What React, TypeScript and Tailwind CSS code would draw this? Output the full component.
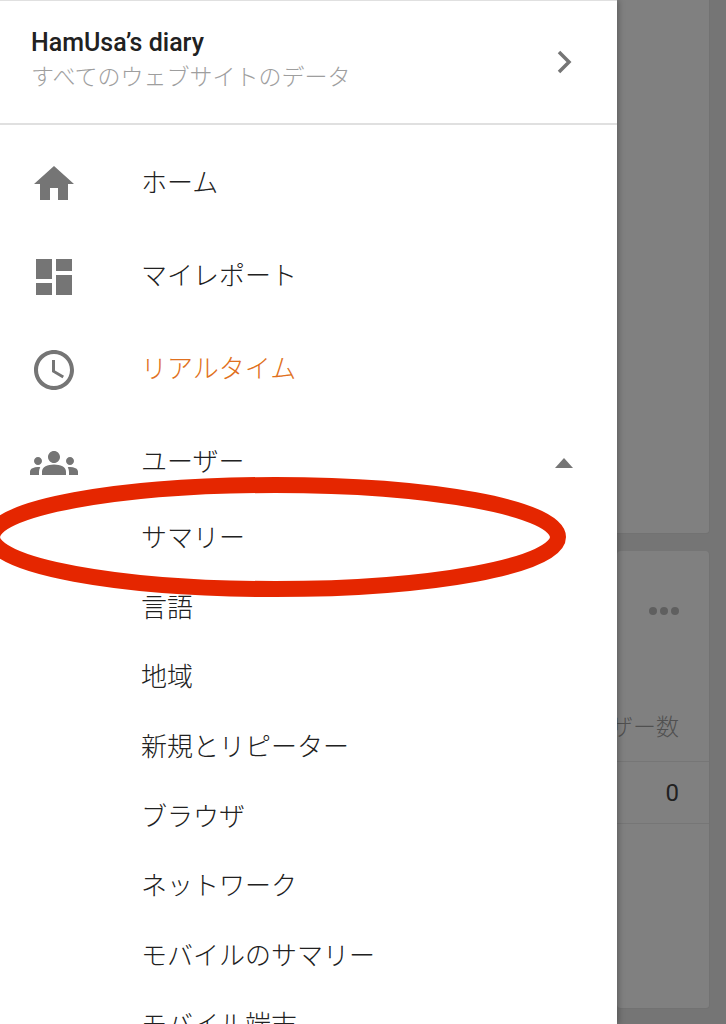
import React from 'react';

const FONT = "font-['Roboto','Noto_Sans_CJK_JP',sans-serif]";

const subItems = ['サマリー', '言語', '地域', '新規とリピーター', 'ブラウザ', 'ネットワーク', 'モバイルのサマリー', 'モバイル端末'];

const Icon: React.FC<{ d: string }> = ({ d }) => (
  <svg viewBox="0 0 24 24" className="w-12 h-12 fill-[#757575]">
    <path d={d} />
  </svg>
);

const ICONS = {
  home: 'M10 20v-6h4v6h5v-8h3L12 3 2 12h3v8z',
  dashboard: 'M3 13h8V3H3v10zm0 8h8v-6H3v6zm10 0h8V11h-8v10zm0-18v6h8V3h-8z',
  clock: 'M11.99 2C6.47 2 2 6.48 2 12s4.47 10 9.99 10C17.52 22 22 17.52 22 12S17.52 2 11.99 2zM12 20c-4.42 0-8-3.58-8-8s3.58-8 8-8 8 3.58 8 8-3.58 8-8 8zm.5-13H11v6l5.25 3.15.75-1.23-4.5-2.67z',
  groups: 'M12 12.75c1.63 0 3.07.39 4.24.9 1.08.48 1.76 1.56 1.76 2.73V18H6v-1.61c0-1.18.68-2.26 1.76-2.73 1.17-.52 2.61-.91 4.24-.91zM4 13c1.1 0 2-.9 2-2s-.9-2-2-2-2 .9-2 2 .9 2 2 2zm1.13 1.1c-.37-.06-.74-.1-1.13-.1-.99 0-1.93.21-2.78.58C.48 14.9 0 15.62 0 16.43V18h4.5v-1.61c0-.83.23-1.61.63-2.29zM20 13c1.1 0 2-.9 2-2s-.9-2-2-2-2 .9-2 2 .9 2 2 2zm4 3.43c0-.81-.48-1.53-1.22-1.85-.85-.37-1.79-.58-2.78-.58-.39 0-.76.04-1.13.1.4.68.63 1.46.63 2.29V18H24v-1.57zM12 6c1.66 0 3 1.34 3 3s-1.34 3-3 3-3-1.34-3-3 1.34-3 3-3z',
};

const NavRow: React.FC<{ icon: string; label: string; active?: boolean; children?: React.ReactNode }> = ({ icon, label, active, children }) => (
  <div className="h-[93px] flex items-center pl-[30px] pr-[44px]">
    <Icon d={icon} />
    <span className={`ml-[63px] flex-1 text-[26px] font-light ${active ? 'text-[#e07020]' : 'text-[#212121]'}`}>{label}</span>
    {children}
  </div>
);

export default function App() {
  return (
    <div className={`relative h-[1024px] w-[726px] overflow-hidden flex bg-[#757575] ${FONT}`}>
      {/* drawer */}
      <div className="relative z-10 w-[617px] h-full shrink-0 overflow-hidden bg-white shadow-[2px_0_6px_rgba(0,0,0,0.25)]">
        <div className="h-[125px] border-t border-b-2 border-[#e0e0e0] flex items-center pl-[31px] pr-[44px]">
          <div className="flex-1 -mt-[2px]">
            <div className="text-[25px] leading-[34px] font-medium text-[#212121]">HamUsa’s diary</div>
            <div className="text-[23px] leading-[36px] font-light text-[#9e9e9e]">すべてのウェブサイトのデータ</div>
          </div>
          <svg viewBox="0 0 16 24" className="w-4 h-6 fill-none stroke-[#757575] stroke-[3.5]">
            <path d="M2 2l10 10-10 10" />
          </svg>
        </div>
        <div className="pt-[12px]">
          <NavRow icon={ICONS.home} label="ホーム" />
          <NavRow icon={ICONS.dashboard} label="マイレポート" />
          <NavRow icon={ICONS.clock} label="リアルタイム" active />
          <NavRow icon={ICONS.groups} label="ユーザー">
            <div className="w-0 h-0 border-x-[9px] border-x-transparent border-b-[10px] border-b-[#757575]" />
          </NavRow>
          <div className="-mt-[5px]">
            {subItems.map((item) => (
              <div key={item} className="h-[69.6px] flex items-center pl-[141px] text-[26px] font-light text-[#212121]">
                {item}
              </div>
            ))}
          </div>
        </div>
      </div>

      {/* dimmed page behind */}
      <div className="flex-1 min-w-0 h-full pr-4 flex flex-col gap-[17px]">
        <div className="h-[534px] shrink-0 bg-[#808080] border-b border-r border-[#727272] rounded-br-sm" />
        <div className="h-[458px] shrink-0 bg-[#808080] border-b border-r border-[#727272] rounded-sm">
          <div className="h-[179px] flex flex-col items-end justify-end pr-[30px] relative">
            <div className="absolute top-[56px] right-[30px] flex gap-[3px]">
              <span className="w-2 h-2 rounded-full bg-[#5f5f5f]" />
              <span className="w-2 h-2 rounded-full bg-[#5f5f5f]" />
              <span className="w-2 h-2 rounded-full bg-[#5f5f5f]" />
            </div>
          </div>
          <div className="h-[31px] -mt-[17px] flex justify-end items-center pr-[30px] text-[23px] font-light text-[#505050] whitespace-nowrap overflow-hidden">
            ユーザー数
          </div>
          <div className="h-[62px] mt-[17px] border-t border-[#767676] flex justify-end items-center pr-[30px] text-[24px] text-[#212121]">
            0
          </div>
          <div className="border-t border-[#767676]" />
        </div>
      </div>

      {/* hand-drawn marker over the screenshot */}
      <svg viewBox="0 0 726 1024" className="absolute inset-0 z-20 w-[726px] h-[1024px] pointer-events-none fill-none">
        <ellipse cx="275" cy="537" rx="283" ry="52" stroke="#e52600" strokeWidth="16" />
      </svg>
    </div>
  );
}
